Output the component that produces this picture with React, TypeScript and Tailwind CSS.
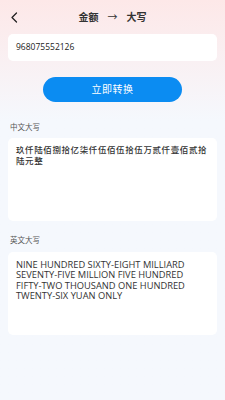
export default function App() {
  return (
    <div
      className="flex h-[400px] w-[225px] flex-col bg-gradient-to-b from-[#fde8e8] via-[#f5f8fd] via-30% to-[#f5f8fd] text-[#222]"
      style={{ fontFamily: '"Open Sans", "Noto Sans CJK SC", sans-serif' }}
    >
      <div className="relative flex h-[34px] items-center justify-center">
        <svg className="absolute left-[10px] top-[12px]" width="9" height="11" viewBox="0 0 9 11" fill="none">
          <path d="M6.5 1L2 5.5L6.5 10" stroke="#222" strokeWidth="1.3" strokeLinecap="round" strokeLinejoin="round" />
        </svg>
        <div className="flex items-center gap-[9px] text-[10px] font-bold text-[#333]">
          <span>金额</span>
          <span className="font-normal">→</span>
          <span>大写</span>
        </div>
      </div>

      <div className="mx-[8px] flex h-[27px] items-center rounded-[5px] bg-white px-[8px] text-[8.5px] text-[#222]">
        968075552126
      </div>

      <div className="mt-[16px] flex justify-center">
        <button className="flex h-[25px] w-[139px] items-center justify-center rounded-full bg-[#0b8cf2] text-[10px] tracking-[0.5px] text-white">
          立即转换
        </button>
      </div>

      <div className="mt-[20px] px-[10px] text-[7.5px] text-[#555]">中文大写</div>
      <div className="mx-[8px] mt-[5px] h-[83px] rounded-[5px] bg-white px-[8px] pt-[6px] text-[8.5px] font-medium leading-[11px] tracking-[0.6px] text-[#333]">
        玖仟陆佰捌拾亿柒仟伍佰伍拾伍万贰仟壹佰贰拾陆元整
      </div>

      <div className="mt-[14px] px-[10px] text-[7.5px] text-[#555]">英文大写</div>
      <div className="mx-[8px] mt-[5px] h-[83px] rounded-[5px] bg-white px-[8px] pt-[8px] text-[9.3px] leading-[10.5px] text-[#333]">
        NINE HUNDRED SIXTY-EIGHT MILLIARD SEVENTY-FIVE MILLION FIVE HUNDRED FIFTY-TWO THOUSAND ONE HUNDRED TWENTY-SIX YUAN ONLY
      </div>
    </div>
  )
}
